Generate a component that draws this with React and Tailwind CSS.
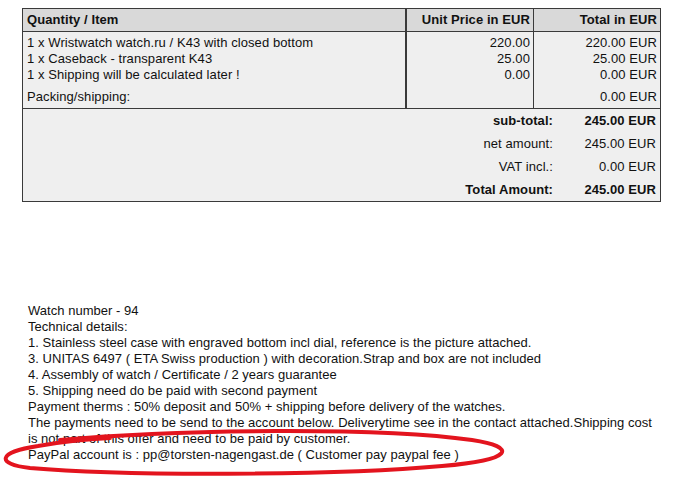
export default function App() {
  const font = { fontFamily: '"Liberation Sans", Arial, sans-serif' };
  return (
    <div className="relative min-h-[480px] w-[689px] bg-white text-[13px] leading-[16px] tracking-[0.08px] text-[#111]" style={font}>
      <div className="pt-[8px] pl-[22px]">
        <div className="w-[639px] border border-[#3a3a3a] bg-[#efefef]">
          {/* header */}
          <div className="flex h-[23px] items-center border-b border-[#3a3a3a] bg-[#d9d9d9] font-bold">
            <div className="w-[382px] pl-[4px]">Quantity / Item</div>
            <div className="h-full w-[2px] bg-[#3a3a3a]" />
            <div className="flex h-full w-[126px] items-center justify-end pr-[3px]">Unit Price in EUR</div>
            <div className="h-full w-[1px] bg-[#3a3a3a]" />
            <div className="flex-1 pr-[3px] text-right">Total in EUR</div>
          </div>
          {/* body */}
          <div className="flex border-b border-[#3a3a3a]">
            <div className="w-[382px] pt-[3px] pb-[3px] pl-[4px]">
              <div>1 x Wristwatch watch.ru / K43 with closed bottom</div>
              <div>1 x Caseback - transparent K43</div>
              <div>1 x Shipping will be calculated later !</div>
              <div className="mt-[6px]">Packing/shipping:</div>
            </div>
            <div className="w-[2px] bg-[#3a3a3a]" />
            <div className="w-[126px] pt-[3px] pr-[3px] text-right">
              <div>220.00</div>
              <div>25.00</div>
              <div>0.00</div>
            </div>
            <div className="w-[1px] bg-[#3a3a3a]" />
            <div className="flex-1 pt-[3px] pr-[3px] text-right">
              <div>220.00 EUR</div>
              <div>25.00 EUR</div>
              <div>0.00 EUR</div>
              <div className="mt-[6px]">0.00 EUR</div>
            </div>
          </div>
          {/* summary */}
          <div className="flex flex-col">
            {[
              ["sub-total:", "245.00 EUR", true],
              ["net amount:", "245.00 EUR", false],
              ["VAT incl.:", "0.00 EUR", false],
              ["Total Amount:", "245.00 EUR", true],
            ].map(([label, value, bold]) => (
              <div key={label} className={`flex h-[23px] items-center ${bold ? "font-bold" : ""}`}>
                <div className="flex-1 text-right">{label}</div>
                <div className="w-[107px] pr-[4px] text-right">{value}</div>
              </div>
            ))}
          </div>
        </div>
      </div>

      <div className="relative mt-[101px] pl-[28px] tracking-[0.03px]">
        <div>Watch number - 94</div>
        <div>Technical details:</div>
        <div>1. Stainless steel case with engraved bottom incl dial, reference is the picture attached.</div>
        <div>3. UNITAS 6497 ( ETA Swiss production ) with decoration.Strap and box are not included</div>
        <div>4. Assembly of watch / Certificate / 2 years guarantee</div>
        <div>5. Shipping need do be paid with second payment</div>
        <div>Payment therms : 50% deposit and 50% + shipping before delivery of the watches.</div>
        <div>The payments need to be send to the account below. Deliverytime see in the contact attached.Shipping cost</div>
        <div>is not part of this offer and need to be paid by customer.</div>
        <div>PayPal account is : pp@torsten-nagengast.de ( Customer pay paypal fee )</div>
      </div>

      <svg className="pointer-events-none absolute top-0 left-0" width="689" height="480">
        <path
          d="M 60 440 C 180 429, 380 427, 472 440 C 518 447, 514 460, 442 466 C 330 476, 120 476, 30 468 C -5 464, -2 452, 38 446 C 60 442, 90 439, 110 438"
          fill="none"
          stroke="#e3141e"
          strokeWidth="4"
          strokeLinecap="round"
        />
      </svg>
    </div>
  );
}
